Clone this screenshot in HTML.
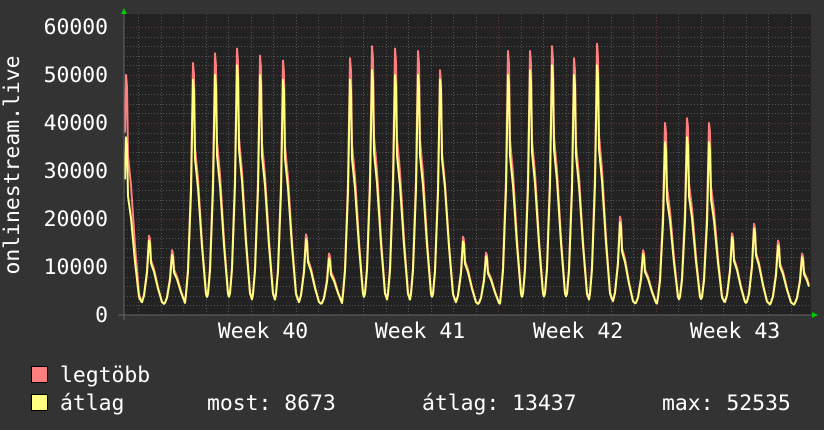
<!DOCTYPE html>
<html><head><meta charset="utf-8">
<style>
html,body{margin:0;padding:0;background:#333;}
body{width:824px;height:430px;overflow:hidden;position:relative;font-family:"DejaVu Sans Mono","Liberation Mono",monospace;color:#fff;}
svg{position:absolute;left:0;top:0;}
</style></head>
<body>
<svg id="g" width="824" height="430" xmlns="http://www.w3.org/2000/svg" font-family="DejaVu Sans Mono, Liberation Mono, monospace" font-size="21.4" fill="#fff">
<rect x="124" y="14" width="687" height="301" fill="#222"/>
<g id="grid"></g>
<g id="data"></g>
<line x1="118" y1="315" x2="814" y2="315" stroke="#666" stroke-width="1"/>
<line x1="124" y1="12" x2="124" y2="320" stroke="#666" stroke-width="1"/>
<polygon points="121,14 127,14 124,8" fill="#0c0"/>
<polygon points="812,312 812,318 818,315" fill="#0c0"/>
<g text-anchor="end">
<text x="108" y="34">60000</text>
<text x="108" y="82">50000</text>
<text x="108" y="130">40000</text>
<text x="108" y="178">30000</text>
<text x="108" y="226">20000</text>
<text x="108" y="274">10000</text>
<text x="108" y="322">0</text>
</g>
<g text-anchor="middle">
<text x="263" y="338">Week 40</text>
<text x="420" y="338">Week 41</text>
<text x="578" y="338">Week 42</text>
<text x="735" y="338">Week 43</text>
</g>
<text transform="translate(19,165) rotate(-90)" text-anchor="middle">onlinestream.live</text>
<rect x="31.5" y="366.5" width="16" height="16" fill="#ff7f7f" stroke="#000"/>
<rect x="31.5" y="394.5" width="16" height="16" fill="#ffff80" stroke="#000"/>
<text x="60" y="382">legtöbb</text>
<text x="60" y="410">átlag</text>
<text x="207" y="410">most: 8673</text>
<text x="422" y="410">átlag: 13437</text>
<text x="662" y="410">max: 52535</text>
</svg>
<script>
(function(){
var ns="http://www.w3.org/2000/svg";
var grid=document.getElementById('grid'),data=document.getElementById('data');
function ln(x1,y1,x2,y2,c){var l=document.createElementNS(ns,'line');l.setAttribute('x1',x1);l.setAttribute('y1',y1);l.setAttribute('x2',x2);l.setAttribute('y2',y2);l.setAttribute('stroke',c);l.setAttribute('stroke-width',1);l.setAttribute('stroke-dasharray','1,2');grid.appendChild(l);}
for(var v=2000;v<=60000;v+=2000){var y=Math.round(315-v*0.0048)+0.5;ln(124,y,811,y,(v%10000==0)?'#6a3a3a':'#555');}
for(var x=138;x<811;x+=22.5){var major=false;for(var k=0;k<5;k++){if(Math.abs(x-(183+157.5*k))<1)major=true;}ln(Math.round(x)+0.5,14,Math.round(x)+0.5,315,major?'#6a3a3a':'#555');}
var P=[126,149,172,193,215,237,260,283,306,329,350,372,395,418,440,463,486,508,530,552,574,597,620,643,665,687,709,732,754,778,802];
var R=[50000,16500,13500,52500,54500,55500,54000,53000,16800,12800,53500,56000,55500,55000,51000,16300,13000,55000,55000,56000,53500,56500,20500,13500,40000,41000,40000,17000,19000,15500,12800];
var Y=[37000,15500,12500,49000,50000,52000,50000,49000,15800,11800,49000,51000,50000,50000,49000,15300,12200,50000,51000,52000,50000,52000,19300,12700,36000,37000,36000,16200,18000,14500,12000];
var S=[[-8,0],[-5,0.15],[-2,0.5],[-1,0.75],[0,1],[1,0.95],[2,0.65],[5,0.52],[9,0.26],[13,0.05],[17,0]];
function shp(t){if(t<=S[0][0]||t>=S[S.length-1][0])return 0;for(var i=1;i<S.length;i++){if(t<=S[i][0]){var a=S[i-1],b=S[i];return a[1]+(b[1]-a[1])*(t-a[0])/(b[0]-a[0]);}}return 0;}
function val(x,A){var mn=2000,v=mn;for(var i=0;i<P.length;i++){var c=shp(x-P[i]);v=Math.max(v,mn+(A[i]-mn)*c);}return v;}
function poly(A,col){var pts=[];for(var x=125;x<=809;x+=1){var v=val(x,A);pts.push(x+','+(315-v*0.0048).toFixed(1));}
var p=document.createElementNS(ns,'polyline');p.setAttribute('points',pts.join(' '));p.setAttribute('fill','none');p.setAttribute('stroke',col);p.setAttribute('stroke-width',2);p.setAttribute('stroke-linejoin','round');data.appendChild(p);}
poly(R,'#ff7f7f');poly(Y,'#ffff80');
})();
</script>
</body></html>
